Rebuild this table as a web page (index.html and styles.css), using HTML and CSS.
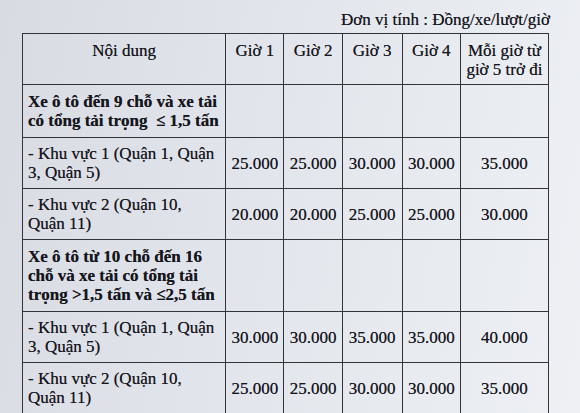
FILE: index.html
```html
<!DOCTYPE html>
<html lang="vi">
<head>
<meta charset="utf-8">
<title>Bảng giá</title>
<link rel="stylesheet" href="styles.css">
</head>
<body>
<div class="page">
  <p class="unit">Đơn vị tính : Đồng/xe/lượt/giờ</p>
  <table class="fees">
    <colgroup>
      <col class="c-name"><col class="c-h"><col class="c-h"><col class="c-h4"><col class="c-h"><col class="c-last">
    </colgroup>
    <tr class="r-head">
      <th>Nội dung</th><th>Giờ 1</th><th>Giờ 2</th><th>Giờ 3</th><th>Giờ 4</th><th>Mỗi giờ từ<br>giờ 5 trở đi</th>
    </tr>
    <tr class="r-group">
      <td class="group">Xe ô tô đến 9 chỗ và xe tải<br>có tổng tải trọng &nbsp;≤ 1,5 tấn</td><td></td><td></td><td></td><td></td><td></td>
    </tr>
    <tr class="r-row">
      <td class="name">- Khu vực 1 (Quận 1, Quận 3, Quận 5)</td><td>25.000</td><td>25.000</td><td>30.000</td><td>30.000</td><td>35.000</td>
    </tr>
    <tr class="r-row">
      <td class="name">- Khu vực 2 (Quận 10,<br>Quận 11)</td><td>20.000</td><td>20.000</td><td>25.000</td><td>25.000</td><td>30.000</td>
    </tr>
    <tr class="r-group2">
      <td class="group">Xe ô tô từ 10 chỗ đến 16<br>chỗ và xe tải có tổng tải<br>trọng &gt;1,5 tấn và ≤2,5 tấn</td><td></td><td></td><td></td><td></td><td></td>
    </tr>
    <tr class="r-row">
      <td class="name">- Khu vực 1 (Quận 1, Quận 3, Quận 5)</td><td>30.000</td><td>30.000</td><td>35.000</td><td>35.000</td><td>40.000</td>
    </tr>
    <tr class="r-row">
      <td class="name">- Khu vực 2 (Quận 10,<br>Quận 11)</td><td>25.000</td><td>25.000</td><td>30.000</td><td>30.000</td><td>35.000</td>
    </tr>
  </table>
</div>
</body>
</html>
```

FILE: styles.css
```css
html, body {
  margin: 0;
  padding: 0;
}
body {
  width: 580px;
  height: 413px;
  overflow: hidden;
  background: linear-gradient(100deg, #d8dbe1 0%, #e1e4ea 40%, #e8ebf0 75%, #eef0f4 100%);
  font-family: "Liberation Serif", "Times New Roman", serif;
  color: #16161d;
  text-shadow: 0 0 0.6px rgba(20, 20, 30, 0.7);
}
.page {
  padding: 0 0 0 22px;
}
.unit {
  margin: 0;
  height: 33px;
  box-sizing: border-box;
  padding: 10px 30px 0 0;
  text-align: right;
  font-size: 17px;
  line-height: 19px;
}
.fees {
  border-collapse: collapse;
  table-layout: fixed;
  width: 527px;
  font-size: 17px;
  line-height: 19px;
}
.c-name { width: 203px; }
.c-h { width: 58px; }
.c-h4 { width: 60px; }
.c-last { width: 88px; }
.fees th, .fees td {
  border: 1.5px solid #33343a;
  padding: 0 4px;
  text-align: center;
  vertical-align: middle;
  font-weight: normal;
  white-space: nowrap;
}
.fees th {
  vertical-align: top;
  padding-top: 7px;
}
.fees td.name, .fees td.group {
  text-align: left;
  padding-left: 5px;
  white-space: normal;
}
.fees td.group {
  font-weight: bold;
}
.r-head { height: 51px; }
.r-group { height: 53px; }
.r-row { height: 51px; }
.r-group2 { height: 72px; }
```
